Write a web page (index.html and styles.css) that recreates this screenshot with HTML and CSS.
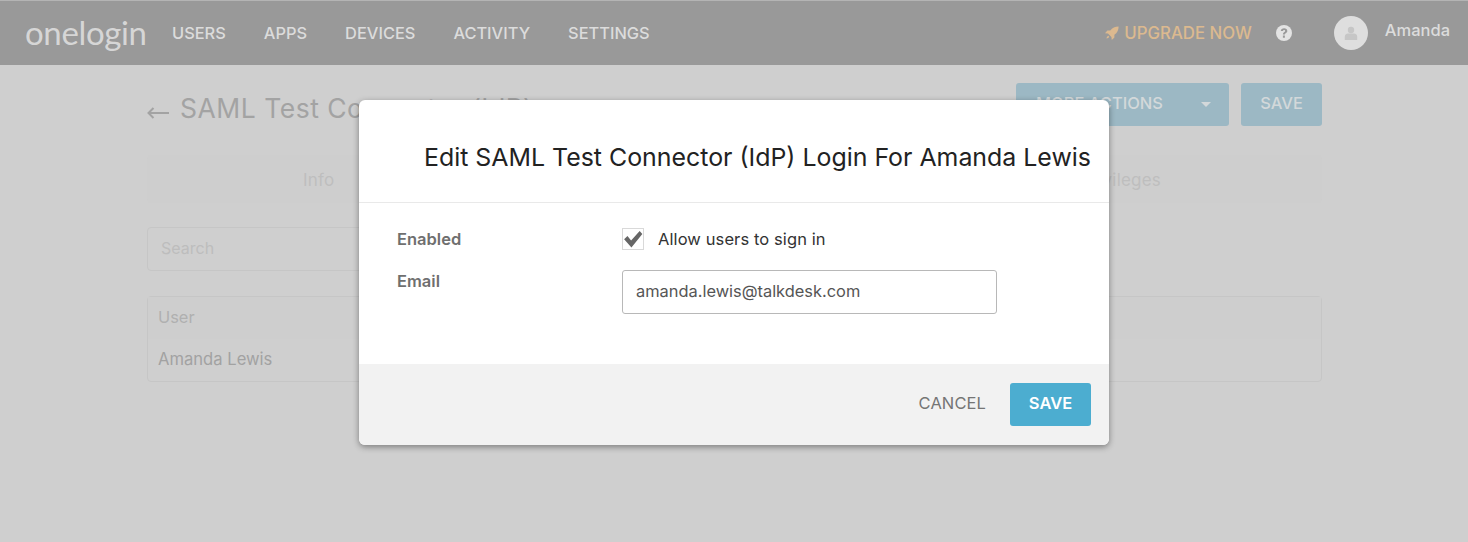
FILE: index.html
```html
<!DOCTYPE html>
<html lang="en">
<head>
<meta charset="utf-8">
<title>OneLogin</title>
<link rel="stylesheet" href="styles.css">
</head>
<body>
<header class="topbar">
  <div class="logo">onelogin</div>
  <nav class="nav">
    <a>USERS</a><a>APPS</a><a>DEVICES</a><a>ACTIVITY</a><a>SETTINGS</a>
  </nav>
  <div class="upgrade">
    <svg class="rocket" viewBox="0 0 14 14" width="14" height="14"><path d="M13.6.4C10 .4 7.2 1.8 5.3 4.6H2.4L0 7.2l3 .4 3.4 3.4.4 3 2.6-2.4V8.700C12.200 6.800 13.600 4 13.600.4zM3.300 9.800C2.300 10.300 1.700 11.300 1.500 12.500 2.700 12.300 3.700 11.700 4.200 10.700z"/></svg>
    <span>UPGRADE NOW</span>
  </div>
  <svg class="help" viewBox="0 0 16 16" width="16" height="16"><circle cx="8" cy="8" r="8" fill="#e3e3e3"/><path d="M4.800 6C4.900 4.200 6.300 3.200 8.100 3.200c1.800 0 3.200 1.100 3.200 2.700 0 1.100-.7 1.700-1.500 2.300-.7.400-.9.700-.9 1.300H6.900c0-1.100.4-1.700 1.100-2.200.7-.5 1.100-.8 1.100-1.300 0-.6-.4-1-1-1-.7 0-1.100.4-1.200 1.100zM6.900 10.500h2V12.700h-2z" fill="#999"/></svg>
  <div class="avatar">
    <svg viewBox="0 0 14 14" width="14" height="14"><circle cx="7" cy="4" r="3.200" fill="#c6c6c6"/><path d="M.8 14v-3.200C.8 8.800 2.400 7.600 4 7.600h6c1.600 0 3.200 1.200 3.200 3.200V14z" fill="#c6c6c6"/></svg>
  </div>
  <div class="username">Amanda</div>
</header>

<main class="page">
  <div class="title-row">
    <h1 class="title">
      <svg class="arrow" viewBox="0 0 22 12" width="22" height="12"><path d="M6.500 1 1.500 6l5 5M2 6h20" fill="none" stroke="#a3a3a3" stroke-width="2"/></svg>
      <span>SAML Test Connector (IdP)</span>
    </h1>
    <div class="actions">
      <button class="ghost-btn more">MORE ACTIONS <i class="caret"></i></button>
      <button class="ghost-btn">SAVE</button>
    </div>
  </div>
  <div class="tabs">
    <span class="tab tab-info">Info</span>
    <span class="tab tab-priv">Privileges</span>
  </div>
  <div class="search">Search</div>
  <div class="table">
    <div class="cell head">User</div>
    <div class="cell name">Amanda Lewis</div>
  </div>
</main>

<section class="modal">
  <h2 class="modal-title">Edit SAML Test Connector (IdP) Login For Amanda Lewis</h2>
  <div class="modal-body">
    <div class="row row-enabled">
      <label class="label">Enabled</label>
      <div class="check-wrap">
        <span class="checkbox">
          <svg viewBox="0 0 18 16" width="20" height="18"><path d="M1 8.200 4 5.400 7.300 9.400 15 .8 17.400 3.500 7.600 15.600z" fill="#666"/></svg>
        </span>
        <span class="check-text">Allow users to sign in</span>
      </div>
    </div>
    <div class="row row-email">
      <label class="label">Email</label>
      <input class="email" type="text" value="amanda.lewis@talkdesk.com">
    </div>
  </div>
  <div class="modal-foot">
    <button class="cancel">CANCEL</button>
    <button class="save">SAVE</button>
  </div>
</section>
</body>
</html>
```
FILE: styles.css
```css
* { box-sizing: border-box; }
html, body { margin: 0; height: 100%; }
body {
  background: #cfcfcf;
  font-family: "Inter", "Liberation Sans", sans-serif;
  overflow: hidden;
  position: relative;
}
.topbar {
  height: 65px;
  background: #999;
  border-top: 1px solid #b4b4b4;
  display: flex;
  align-items: center;
  padding-left: 25px;
}
.logo {
  font-family: "Lato", sans-serif;
  font-size: 33px;
  font-weight: 400;
  color: #d6d6d6;
  width: 147px;
  letter-spacing: -0.35px;
  line-height: 40px;
  margin-top: -3px;
}
.nav { display: flex; gap: 38px; font-size: 16.400px; font-weight: 500; color: #dcdcdc; margin-top: -1px; }
.upgrade {
  margin-left: auto;
  display: flex;
  align-items: center;
  gap: 5px;
  color: #dcb98f;
  font-size: 16.800px;
  font-weight: 500;
}
.rocket { fill: #dcb98f; }
.help { margin-left: 24px; }
.avatar {
  width: 34px;
  height: 34px;
  border-radius: 50%;
  background: #dedede;
  margin-left: 42px;
  display: flex;
  align-items: center;
  justify-content: center;
}
.username {
  margin-left: 17px;
  margin-right: 18px;
  margin-top: -6px;
  font-size: 16.500px;
  font-weight: 500;
  color: #dcdcdc;
}
.page { width: 1175px; margin-left: 147px; }
.title-row {
  display: flex;
  justify-content: space-between;
  padding-top: 18px;
  height: 90px;
}
.title {
  margin: 10px 0 0;
  align-self: flex-start;
  font-size: 26.500px;
  font-weight: 400;
  letter-spacing: 0.5px;
  color: #a3a3a3;
  line-height: 30px;
  display: flex;
  gap: 11px;
  align-items: center;
}
.arrow { margin-top: 10px; }
.actions { display: flex; gap: 12px; }
.ghost-btn {
  height: 43px;
  width: 81px;
  border: 0;
  border-radius: 3px;
  background: #9cb8c4;
  color: #d3d8da;
  font: 500 16.500px "Inter", sans-serif;
  padding: 0 0 4px;
}
.more { width: 213px; text-align: left; padding-left: 20px; position: relative; }
.caret {
  position: absolute;
  right: 18px;
  top: 19px;
  border: 5px solid transparent;
  border-top: 5px solid #d3d8da;
  border-bottom: 0;
}
.tabs {
  height: 48px;
  background: #cecece;
  border-radius: 4px;
  display: flex;
  align-items: center;
  color: #bebebe;
  font-size: 17px;
  letter-spacing: 0.2px;
  justify-content: space-between;
  padding-top: 2px;
}
.tab-info { margin-left: 156px; }
.tab-priv { margin-right: 161px; }
.search {
  margin-top: 24px;
  width: 480px;
  height: 44px;
  border: 1px solid #c6c6c6;
  border-radius: 4px;
  padding-left: 13px;
  line-height: 41px;
  font-size: 16px;
  color: #bdbdbd;
}
.table {
  margin-top: 25px;
  border: 1px solid #c6c6c6;
  border-radius: 4px;
  height: 86px;
}
.cell { height: 42px; line-height: 40px; padding-left: 10px; font-size: 16.600px; color: #a2a2a2; }
.head { color: #b0b0b0; background: #cecece; font-size: 16.400px; }
.modal {
  position: absolute;
  left: 359px;
  top: 100px;
  width: 750px;
  height: 345px;
  background: #fff;
  border-radius: 6px;
  box-shadow: 0 2px 6px rgba(0, 0, 0, .4);
  display: flex;
  flex-direction: column;
  overflow: hidden;
}
.modal-title {
  margin: 0;
  height: 103px;
  flex: none;
  border-bottom: 1px solid #e9e9e9;
  padding: 42px 0 0 65px;
  font-size: 24.900px;
  line-height: 30px;
  font-weight: 400;
  color: #222;
  white-space: nowrap;
}
.modal-body { flex: 1; padding: 25px 0 0 38px; }
.row { display: flex; align-items: flex-start; }
.row-enabled { height: 42px; }
.label { width: 225px; font-size: 16.500px; font-weight: 600; color: #6f6f6f; line-height: 22px; }
.check-wrap { display: flex; align-items: center; gap: 14px; }
.checkbox {
  width: 22px;
  height: 22px;
  border: 1px solid #d9d9d9;
  display: flex;
  align-items: center;
  justify-content: center;
}
.check-text { font-size: 16.500px; letter-spacing: 0.1px; color: #333; }
.email {
  width: 375px;
  height: 44px;
  border: 1px solid #b8b8b8;
  border-radius: 3px;
  padding: 0 13px 2px;
  font: 400 16.400px "Inter", sans-serif;
  color: #555;
  outline: 0;
}
.modal-foot {
  height: 81px;
  flex: none;
  background: #f2f2f2;
  display: flex;
  align-items: center;
  justify-content: flex-end;
  padding-right: 18px;
  gap: 24px;
}
.cancel { border: 0; background: none; padding: 0 0 4px; font: 400 16.500px "Inter", sans-serif; letter-spacing: 0.1px; color: #757575; }
.save {
  width: 81px;
  height: 43px;
  border: 0;
  border-radius: 3px;
  background: #4cadd0;
  color: #fff;
  font: 600 16.500px "Inter", sans-serif;
  padding: 0 0 4px;
}
```
